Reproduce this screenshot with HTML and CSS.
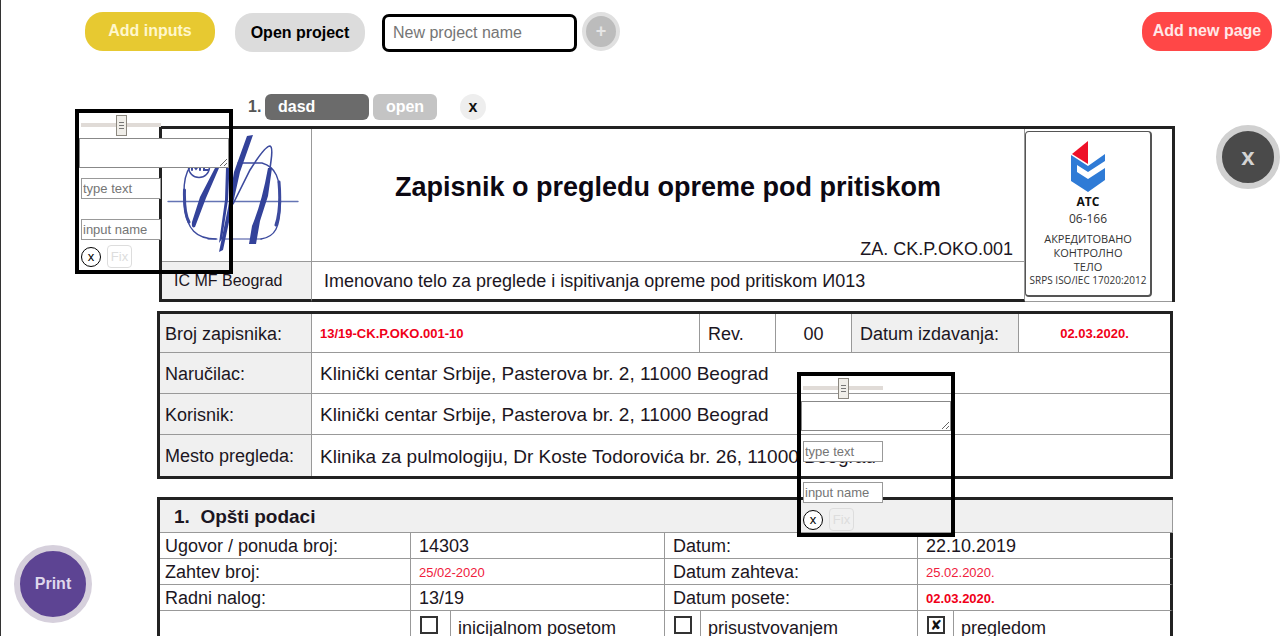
FILE: index.html
```html
<!DOCTYPE html>
<html lang="sr-Latn">
<head>
<meta charset="utf-8">
<title>Zapisnik</title>
<link rel="stylesheet" href="styles.css">
</head>
<body>
<div class="app">
  <header class="toolbar">
    <button class="pill pill-yellow" type="button">Add inputs</button>
    <button class="pill pill-grey" type="button">Open project</button>
    <input class="project-name" type="text" placeholder="New project name" aria-label="New project name">
    <button class="add-project" type="button">+</button>
    <button class="pill pill-red" type="button">Add new page</button>
  </header>

  <div class="project">
    <span class="project-index">1.</span>
    <span class="project-title">dasd</span>
    <button class="project-open" type="button">open</button>
    <button class="project-remove" type="button">x</button>
  </div>

  <main class="document">
    <table class="sheet sheet-head">
      <colgroup><col class="w-logo"><col><col class="w-stamp"></colgroup>
      <tr class="row-title">
        <td class="logo-cell">
          <svg class="logo" viewBox="162 129 149 132" fill="none" stroke="#3c4a9e" stroke-linecap="round">
            <path stroke-width="1.4" stroke="#6474b4" d="M168 201.500H298"/>
            <path stroke-width="1.400" d="M238 163H262C276 167 280 178 280.500 202C280 228 275 237 261 239M216 239C196 239 187 229 184.500 207C183 190 184 175 190 167"/>
            <path stroke-width="1.200" d="M208 239H217M224 239H261"/>
            <path stroke-width="3" d="M279 182C281 205 279 216 276 225M184.500 190C184 208 186 217 189 222"/>
            <path fill="#33429a" stroke="none" d="M215 168L219 168L206 198L195 227Q191 229 192 222L200 197Z"/>
            <path fill="#33429a" stroke="none" d="M226 168L229.500 168L228 200L222 239L219 243L225 200Z"/>
            <path fill="#33429a" stroke="none" d="M247 136L253 135L240 172L232 208L223 250L219 252L228 208L234 172Z"/>
            <path stroke-width="1.600" d="M233 204L250 170Q265 146 270 146Q273 147 271 161L268 183"/>
            <path fill="#33429a" stroke="none" d="M268 168L272 168L268 196L260 221L256 244H249L252 226Q262 202 268 168Z"/>
            <circle cx="199" cy="167" r="10.500" stroke-width="1.500"/>
            <path stroke-width="2" d="M192 170V164L196 169L200 164V170M204 164V170H208"/>
          </svg>
        </td>
        <td class="title-cell">
          <h1 class="title">Zapisnik o pregledu opreme pod pritiskom</h1>
          <p class="code">ZA. CK.P.OKO.001</p>
        </td>
        <td class="stamp-cell" rowspan="2">
          <div class="stamp">
            <svg class="stamp-logo" viewBox="0 0 34 52">
              <path fill="#2f7bd6" d="M0 14L17 25L34 13V20L17 31L6 24V31L17 38L34 27V39L17 51L0 40Z"/>
              <path fill="#ee1028" d="M17 0V23L1 13Z"/>
            </svg>
            <strong class="stamp-name">АТС</strong>
            <span class="stamp-number">06-166</span>
            <span class="stamp-text">АКРЕДИТОВАНО<br>КОНТРОЛНО<br>ТЕЛО</span>
            <span class="stamp-norm">SRPS ISO/IEC 17020:2012</span>
          </div>
        </td>
      </tr>
      <tr class="row-body">
        <td class="shade institute">IC MF Beograd</td>
        <td class="body-name">Imenovano telo za preglede i ispitivanja opreme pod pritiskom И013</td>
      </tr>
    </table>

    <table class="sheet sheet-info">
      <colgroup><col class="w-label"><col><col class="w-rev"><col class="w-rev"><col class="w-issued"><col class="w-date"></colgroup>
      <tr class="row-info">
        <th class="shade">Broj zapisnika:</th>
        <td class="red bold">13/19-CK.P.OKO.001-10</td>
        <td>Rev.</td>
        <td class="center">00</td>
        <th class="shade inner-label">Datum izdavanja:</th>
        <td class="red bold center">02.03.2020.</td>
      </tr>
      <tr class="row-tall"><th class="shade">Naručilac:</th><td class="large" colspan="5">Klinički centar Srbije, Pasterova br. 2, 11000 Beograd</td></tr>
      <tr class="row-tall"><th class="shade">Korisnik:</th><td class="large" colspan="5">Klinički centar Srbije, Pasterova br. 2, 11000 Beograd</td></tr>
      <tr class="row-tall"><th class="shade">Mesto pregleda:</th><td class="large" colspan="5">Klinika za pulmologiju, Dr Koste Todorovića br. 26, 11000 Beograd</td></tr>
    </table>

    <table class="sheet sheet-general">
      <colgroup><col class="w-quarter"><col class="w-check"><col class="w-choice"><col class="w-check-narrow"><col class="w-choice-wide"><col class="w-check-narrow"><col></colgroup>
      <tr class="row-section"><th class="shade section" colspan="7">1.&nbsp; Opšti podaci</th></tr>
      <tr class="row-short"><th>Ugovor / ponuda broj:</th><td colspan="2">14303</td><th class="inner-label" colspan="2">Datum:</th><td colspan="2">22.10.2019</td></tr>
      <tr class="row-short"><th>Zahtev broj:</th><td class="red" colspan="2">25/02-2020</td><th class="inner-label" colspan="2">Datum zahteva:</th><td class="red" colspan="2">25.02.2020.</td></tr>
      <tr class="row-short"><th>Radni nalog:</th><td colspan="2">13/19</td><th class="inner-label" colspan="2">Datum posete:</th><td class="red bold" colspan="2">02.03.2020.</td></tr>
      <tr class="row-check">
        <td></td>
        <td class="check-cell"><input class="check" type="checkbox" id="c1"></td><td class="check-text"><label for="c1">inicijalnom posetom</label></td>
        <td class="check-cell"><input class="check" type="checkbox" id="c2"></td><td class="check-text"><label for="c2">prisustvovanjem</label></td>
        <td class="check-cell"><input class="check" type="checkbox" id="c3" checked></td><td class="check-text"><label for="c3">pregledom</label></td>
      </tr>
    </table>
  </main>

  <section class="panel panel-first">
    <input class="slider" type="range" aria-label="Size">
    <textarea class="note" aria-label="Note"></textarea>
    <input class="field" type="text" placeholder="type text" aria-label="type text">
    <input class="field field-name" type="text" placeholder="input name" aria-label="input name">
    <div class="actions"><button class="remove" type="button">x</button><button class="fix" type="button">Fix</button></div>
  </section>
  <section class="panel panel-second">
    <input class="slider" type="range" aria-label="Size">
    <textarea class="note" aria-label="Note"></textarea>
    <input class="field" type="text" placeholder="type text" aria-label="type text">
    <input class="field field-name" type="text" placeholder="input name" aria-label="input name">
    <div class="actions"><button class="remove" type="button">x</button><button class="fix" type="button">Fix</button></div>
  </section>

  <button class="round close" type="button">x</button>
  <button class="round print" type="button">Print</button>
</div>
</body>
</html>
```

FILE: styles.css
```css
* { box-sizing: border-box; }
body { margin: 0; background: #fff; }
.app {
  position: relative;
  height: 100vh;
  overflow: hidden;
  border-left: 1px solid #333;
  font-family: "Liberation Sans", Arial, sans-serif;
  color: #1c1622;
}
button, input, textarea { font-family: inherit; margin: 0; }
button { padding: 0; border: 0; cursor: pointer; }

/* toolbar */
.toolbar { display: flex; align-items: flex-start; padding: 12px 12px 0 84px; }
.pill { width: 130px; height: 39px; border-radius: 18px; font-size: 16px; font-weight: bold; }
.pill-yellow { background: #e7c931; color: #fff7cc; padding-bottom: 2px; margin-right: 20px; }
.pill-grey { background: #dcdcdc; color: #000; margin: 1px 17px 0 0; }
.pill-red { background: #ff4747; color: #ffe8e8; margin-left: auto; padding-bottom: 2px; }
.project-name {
  width: 195px; height: 38px; margin: 2px 5px 0 0; padding: 0 8px;
  border: 3px solid #000; border-radius: 7px; font-size: 16px; background: #fff;
}
.project-name::placeholder, .field::placeholder { color: #757575; opacity: 1; }
.add-project {
  width: 38px; height: 39px; border: 4px solid #e0e0e0; border-radius: 50%;
  background: #bcbcbc; color: #e6e6e6; font-size: 18px; font-weight: bold;
}

/* project row */
.project {
  display: flex; align-items: center; height: 26px; margin: 42px 0 0 247px;
  font-size: 16px; font-weight: bold; line-height: 26px;
}
.project-index { width: 17px; color: #555; }
.project-title { width: 104px; padding-left: 13px; border-radius: 6px; background: #6b6b6b; color: #fff; }
.project-open {
  width: 64px; height: 26px; margin-left: 4px; border-radius: 6px;
  background: #c4c4c4; color: #fff; font-size: 16px; font-weight: bold;
}
.project-remove {
  width: 26px; height: 26px; margin-left: 23px; border-radius: 50%;
  background: #eee; color: #111; font-size: 16px; font-weight: bold;
}

/* document */
.document { margin: 6px 111px 0 156px; }
.sheet { width: 100%; table-layout: fixed; border-collapse: separate; border-spacing: 0; border: 3px solid #222; }
.sheet td, .sheet th {
  padding: 1px 0 0 8px; border-right: 1px solid #999; border-bottom: 1px solid #999;
  font-size: 18px; font-weight: normal; line-height: 20px; text-align: left; white-space: nowrap;
}
.sheet th { padding-left: 5px; }
.sheet .inner-label { padding-left: 8px; }
.sheet tr > :last-child { border-right: 0; }
.sheet .shade { background: #f0f0f0; }
.sheet .center { text-align: center; padding: 1px 0 0; }
.sheet .red { color: #f0203c; font-size: 13px; padding-top: 2px; }
.sheet .bold { color: #f00018; font-weight: bold; }
.sheet .large { font-size: 19px; padding-top: 2px; }

.sheet-head { border-bottom: 0; margin-left: 2px; }
.row-title { height: 133px; }
.row-body { height: 40px; }
.w-logo { width: 150px; }
.w-stamp { width: 147px; }
.sheet .logo-cell { padding: 0; }
.logo { display: block; width: 149px; height: 132px; }
.sheet .title-cell { padding: 0; vertical-align: bottom; }
.title { margin: 0 0 34px; font-size: 27px; line-height: 36px; text-align: center; color: #0c0812; }
.code { margin: 0 11px 2px 0; text-align: right; }
.sheet .row-title .stamp-cell { padding: 2px 0 0; border-right: 0; vertical-align: top; }
.sheet .row-body td { border-bottom: 3px solid #222; padding-top: 0; }
.sheet .row-body .body-name { border-right: 1px solid #999; padding-left: 12px; }
.sheet .row-body .institute { padding-left: 12px; font-size: 16px; }
.stamp {
  display: flex; flex-direction: column; align-items: center; width: 127px; height: 166px;
  padding-top: 9px; border: 1px solid #555; border-right-width: 2px; border-bottom-width: 2px;
  border-radius: 4px; font-family: "Open Sans", "Noto Sans", sans-serif; color: #333;
}
.stamp-logo { width: 34px; height: 52px; }
.stamp-name { font-size: 12px; line-height: 18px; color: #111; }
.stamp-number { font-size: 12px; line-height: 16px; }
.stamp-text { margin-top: 5px; font-size: 11px; line-height: 14px; text-align: center; }
.stamp-norm { font-size: 10px; line-height: 12px; }

.sheet-info { margin-top: 9px; }
.w-label { width: 152px; }
.w-rev { width: 76px; }
.w-issued { width: 167px; }
.w-date { width: 151px; }
.row-info { height: 39px; }
.row-tall { height: 41px; }
.sheet-info tr:last-child > * { border-bottom: 0; }

.sheet-general { margin-top: 18px; border-right: 0; }
.sheet-general tr > :last-child { border-right: 3px solid #222; }
.w-quarter { width: 251px; }
.w-check { width: 40px; }
.w-choice { width: 214px; }
.w-check-narrow { width: 36px; }
.w-choice-wide { width: 217px; }
.row-section { height: 33px; }
.row-short { height: 26px; }
.row-check { height: 33px; }
.sheet .row-section .section { padding-left: 14px; font-size: 19px; font-weight: bold; border-right: 1px solid #999; }
.sheet .check-cell { padding: 5px 0 0 9px; vertical-align: top; }
.sheet .check-text { padding-left: 7px; }
.check {
  display: block; appearance: none; width: 18px; height: 18px;
  border: 2px solid #333; background: #fff; text-align: center;
}
.check:checked::before { content: "✘"; display: block; font: bold 14px/14px "DejaVu Sans", sans-serif; color: #111; }

/* floating input panels */
.panel { position: absolute; width: 158px; border: 4px solid #000; padding-bottom: 2px; }
.panel-first { left: 74px; top: 109px; }
.panel-second { left: 796px; top: 372px; }
.slider { display: block; appearance: none; width: 80px; height: 23px; margin: 0 0 2px 2px; background: none; }
.slider::-webkit-slider-runnable-track { height: 4px; background: #e0dbd7; }
.slider::-webkit-slider-thumb {
  appearance: none; width: 11px; height: 21px; margin-top: -8px; border: 1px solid #8c8880;
  background: linear-gradient(#777, #777) center 6px / 5px 1px no-repeat,
    linear-gradient(#777, #777) center 9px / 5px 1px no-repeat,
    linear-gradient(#777, #777) center 12px / 5px 1px no-repeat, #f0eee9;
}
.note { display: block; width: 100%; height: 30px; border: 1px solid #888; background: #fff; }
.field {
  display: block; width: 80px; height: 21px; margin: 10px 0 0 2px; padding: 1px;
  border: 1px solid #999; background: #fff; font-size: 13px;
}
.field-name { margin-top: 20px; }
.actions { display: flex; align-items: center; gap: 6px; margin: 5px 0 0 2px; }
.remove { width: 20px; height: 20px; border: 1px solid #000; border-radius: 50%; background: #fff; font-size: 13px; color: #000; }
.fix { width: 25px; height: 23px; border: 1px solid #ddd; border-radius: 4px; background: none; font-size: 13px; color: #ddd; }

/* floating round buttons */
.round { position: absolute; border-radius: 50%; font-weight: bold; }
.close { top: 125px; right: 4px; width: 64px; height: 64px; border: 6px solid #d0d0d0; background: #4a4a4a; color: #d4d4d4; font-size: 24px; }
.print { left: 13px; bottom: 13px; width: 78px; height: 78px; border: 6px solid #d6d0dc; background: #5d4493; color: #dfd8ec; font-size: 16px; }
```
